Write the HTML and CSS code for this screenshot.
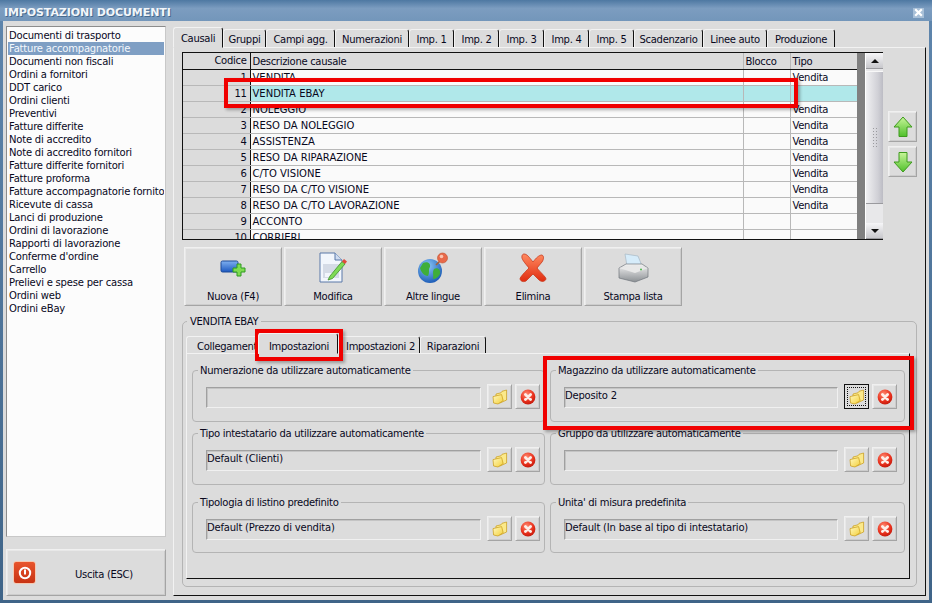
FILE: index.html
```html
<!DOCTYPE html>
<html lang="it">
<head>
<meta charset="utf-8">
<title>Impostazioni documenti</title>
<link rel="stylesheet" href="styles.css">
</head>
<body>
<svg class="defs" width="0" height="0" aria-hidden="true">
  <defs>
    <linearGradient id="gFolder" x1="0" y1="0" x2="1" y2="1"><stop offset="0" stop-color="#fff9c0"/><stop offset="1" stop-color="#f4cf38"/></linearGradient>
    <radialGradient id="gRed" cx=".4" cy=".3" r=".8"><stop offset="0" stop-color="#ff8a70"/><stop offset=".6" stop-color="#e8301c"/><stop offset="1" stop-color="#b81408"/></radialGradient>
    <linearGradient id="gArrow" x1="0" y1="0" x2="0" y2="1"><stop offset="0" stop-color="#c8f59a"/><stop offset="1" stop-color="#4fc02a"/></linearGradient>
    <symbol id="folder" viewBox="0 0 16 16">
      <path d="M4 5 L9 3.8 L10 2.3 L14.6 1 L14.6 11 L8 14 L4 13 Z" fill="#fbe98a" stroke="#c99a14" stroke-width=".7"/>
      <path d="M1 7.6 L9.6 5.6 L11.2 11.6 L6 15 L1.6 14 Z" fill="url(#gFolder)" stroke="#c99a14" stroke-width=".7"/>
    </symbol>
    <symbol id="cancel" viewBox="0 0 16 16">
      <circle cx="8" cy="8" r="7.4" fill="url(#gRed)"/>
      <path d="M5.4 5.4 L10.6 10.6 M10.6 5.4 L5.4 10.6" stroke="#fdeee8" stroke-width="2.8" stroke-linecap="round"/>
    </symbol>
  </defs>
</svg>
<div class="window">
  <header class="titlebar">
    <span class="title">IMPOSTAZIONI DOCUMENTI</span>
    <span class="close">
      <svg width="9" height="9" viewBox="0 0 9 9"><path d="M1.2 1.2 L7.8 7.8 M7.8 1.2 L1.2 7.8" stroke="#fff" stroke-width="2.2"/></svg>
    </span>
  </header>
  <div class="main">
    <aside class="side">
      <ul class="doclist">
        <li>Documenti di trasporto</li>
        <li class="sel">Fatture accompagnatorie</li>
        <li>Documenti non fiscali</li>
        <li>Ordini a fornitori</li>
        <li>DDT carico</li>
        <li>Ordini clienti</li>
        <li>Preventivi</li>
        <li>Fatture differite</li>
        <li>Note di accredito</li>
        <li>Note di accredito fornitori</li>
        <li>Fatture differite fornitori</li>
        <li>Fatture proforma</li>
        <li>Fatture accompagnatorie fornitori</li>
        <li>Ricevute di cassa</li>
        <li>Lanci di produzione</li>
        <li>Ordini di lavorazione</li>
        <li>Rapporti di lavorazione</li>
        <li>Conferme d'ordine</li>
        <li>Carrello</li>
        <li>Prelievi e spese per cassa</li>
        <li>Ordini web</li>
        <li>Ordini eBay</li>
      </ul>
      <button class="exit btn">
        <span class="power">
          <svg width="14" height="14" viewBox="0 0 14 14"><circle cx="7" cy="7" r="5.2" fill="none" stroke="#fff" stroke-width="2"/><rect x="6" y="3.5" width="2" height="5" fill="#fff"/></svg>
        </span>
        <span class="exit-label">Uscita (ESC)</span>
      </button>
    </aside>
    <section class="content">
      <nav class="tabs toptabs">
        <span class="tab on">Causali</span>
        <span class="tab">Gruppi</span>
        <span class="tab">Campi agg.</span>
        <span class="tab">Numerazioni</span>
        <span class="tab">Imp. 1</span>
        <span class="tab">Imp. 2</span>
        <span class="tab">Imp. 3</span>
        <span class="tab">Imp. 4</span>
        <span class="tab">Imp. 5</span>
        <span class="tab">Scadenzario</span>
        <span class="tab">Linee auto</span>
        <span class="tab">Produzione</span>
      </nav>
      <div class="panel">
        <div class="gridrow">
          <div class="grid">
            <div class="tablewrap">
              <table>
                <colgroup><col class="c1"><col class="c2"><col class="c3"><col class="c4"></colgroup>
                <thead><tr><th class="num">Codice</th><th>Descrizione causale</th><th>Blocco</th><th>Tipo</th></tr></thead>
                <tbody>
                  <tr><td class="num">1</td><td>VENDITA</td><td></td><td>Vendita</td></tr>
                  <tr class="hl"><td class="num">11</td><td>VENDITA EBAY</td><td></td><td></td></tr>
                  <tr><td class="num">2</td><td>NOLEGGIO</td><td></td><td>Vendita</td></tr>
                  <tr><td class="num">3</td><td>RESO DA NOLEGGIO</td><td></td><td>Vendita</td></tr>
                  <tr><td class="num">4</td><td>ASSISTENZA</td><td></td><td>Vendita</td></tr>
                  <tr><td class="num">5</td><td>RESO DA RIPARAZIONE</td><td></td><td>Vendita</td></tr>
                  <tr><td class="num">6</td><td>C/TO VISIONE</td><td></td><td>Vendita</td></tr>
                  <tr><td class="num">7</td><td>RESO DA C/TO VISIONE</td><td></td><td>Vendita</td></tr>
                  <tr><td class="num">8</td><td>RESO DA C/TO LAVORAZIONE</td><td></td><td>Vendita</td></tr>
                  <tr><td class="num">9</td><td>ACCONTO</td><td></td><td></td></tr>
                  <tr><td class="num">10</td><td>CORRIERI</td><td></td><td></td></tr>
                </tbody>
              </table>
            </div>
            <div class="gutter"></div>
            <div class="scrollbar">
              <span class="sb-btn"><i class="tri up"></i></span>
              <span class="sb-thumb"><i class="grip"></i></span>
              <span class="sb-track"></span>
              <span class="sb-btn"><i class="tri down"></i></span>
            </div>
          </div>
          <div class="arrows">
            <button class="btn arrow">
              <svg width="20" height="22" viewBox="0 0 20 22"><path d="M10 1 L19 11 L14 11 L14 20.5 L6 20.5 L6 11 L1 11 Z" fill="url(#gArrow)" stroke="#3e9a1e"/></svg>
            </button>
            <button class="btn arrow">
              <svg width="20" height="22" viewBox="0 0 20 22"><path d="M6 1.5 L14 1.5 L14 11 L19 11 L10 21 L1 11 L6 11 Z" fill="url(#gArrow)" stroke="#3e9a1e"/></svg>
            </button>
          </div>
        </div>
        <div class="actions">
          <button class="btn action">
            <svg width="28" height="28" viewBox="0 0 28 28">
              <defs><linearGradient id="gBlue" x1="0" y1="0" x2="0" y2="1"><stop offset="0" stop-color="#7fb0f0"/><stop offset="1" stop-color="#1c58c0"/></linearGradient></defs>
              <rect x="2" y="7" width="17" height="11" rx="1.5" fill="url(#gBlue)" stroke="#1d4a98"/>
              <path d="M15 12 h4 v-4 h4 v4 h4 v4 h-4 v4 h-4 v-4 h-4 Z" transform="translate(-1 2)" fill="#7fdc50" stroke="#2f9a20"/>
            </svg>
            <span>Nuova (F4)</span>
          </button>
          <button class="btn action">
            <svg width="30" height="32" viewBox="0 0 30 32">
              <path d="M2 1 H17 L24 8 V30 H2 Z" fill="#f2f6fc" stroke="#5a78a8"/>
              <path d="M17 1 V8 H24" fill="#cfdcf0" stroke="#5a78a8"/>
              <rect x="5" y="12" width="16" height="14" fill="#d5dbe6"/>
              <rect x="7" y="21" width="9" height="4" fill="#f2f6fc"/>
              <path d="M12 24 L10 28 L14.5 26.5 L27 12 L24 9.5 Z" fill="#7edb55" stroke="#3f8f28" stroke-width=".8"/>
              <path d="M24 9.5 L26 7 L29 9.5 L27 12 Z" fill="#e0493a"/>
            </svg>
            <span>Modifica</span>
          </button>
          <button class="btn action">
            <svg width="32" height="32" viewBox="0 0 32 32">
              <defs><radialGradient id="gGlobe" cx=".4" cy=".3" r=".8"><stop offset="0" stop-color="#8cc8f8"/><stop offset="1" stop-color="#1050b0"/></radialGradient></defs>
              <circle cx="13" cy="19" r="12" fill="url(#gGlobe)"/>
              <path d="M6 11 C10 9 14 11 13 15 C11 18 13 20 11 24 C7 24 4 20 3 16 Z M17 17 C21 15 24 18 23 22 C21 26 18 27 16 27 C17 23 15 20 17 17 Z" fill="#3fae3a"/>
              <path d="M19 13 L25 7" stroke="#a86038" stroke-width="1.6"/>
              <circle cx="25.5" cy="6" r="5" fill="#e8694a" stroke="#c0502c" stroke-width=".6"/>
              <circle cx="24.5" cy="4.5" r="1.8" fill="#fbc4b0"/>
            </svg>
            <span>Altre lingue</span>
          </button>
          <button class="btn action">
            <svg width="30" height="30" viewBox="0 0 30 30">
              <defs><linearGradient id="gX" x1="0" y1="0" x2="0" y2="1"><stop offset="0" stop-color="#ff8a60"/><stop offset="1" stop-color="#e02c10"/></linearGradient></defs>
              <path d="M6 1 C9 1 11 4 15 9 C18 5 21 2 24 2 C26 3 26 6 24 9 L19 15 C22 19 28 24 28 26 C27 29 23 29 21 27 L15 21 L8 28 C6 29 3 29 2 26 C2 24 7 19 11 15 C7 10 3 6 4 3 C4 2 5 1 6 1 Z" fill="url(#gX)" stroke="#c83a1c" stroke-width=".8"/>
            </svg>
            <span>Elimina</span>
          </button>
          <button class="btn action">
            <svg width="32" height="30" viewBox="0 0 32 30">
              <defs><linearGradient id="gPr" x1="0" y1="0" x2="0" y2="1"><stop offset="0" stop-color="#f4f4f4"/><stop offset="1" stop-color="#8c9094"/></linearGradient></defs>
              <path d="M8 1 L21 3 L25 13 L10 13 Z" fill="#d6ecfa" stroke="#a8b8c4" stroke-width=".7"/>
              <path d="M2 15 L9 11 H25 L31 15 V24 L18 29 L2 25 Z" fill="url(#gPr)" stroke="#70767c" stroke-width=".7"/>
              <path d="M2 15 L18 20 L31 15 L18 12 Z" fill="#e8e8e8"/>
              <circle cx="24" cy="16.5" r="1" fill="#4cb84c"/>
            </svg>
            <span>Stampa lista</span>
          </button>
        </div>
        <fieldset class="detail">
          <legend>VENDITA EBAY</legend>
          <nav class="tabs subtabs">
            <span class="tab">Collegamenti</span>
            <span class="tab on">Impostazioni</span>
            <span class="tab">Impostazioni 2</span>
            <span class="tab">Riparazioni</span>
          </nav>
          <div class="subpanel">
            <fieldset class="opt">
              <legend>Numerazione da utilizzare automaticamente</legend>
              <div class="optrow"><span class="field"></span>
                <button class="btn sq"><svg width="16" height="16"><use href="#folder"/></svg></button>
                <button class="btn sq"><svg width="16" height="16"><use href="#cancel"/></svg></button></div>
            </fieldset>
            <fieldset class="opt">
              <legend>Magazzino da utilizzare automaticamente</legend>
              <div class="optrow"><span class="field">Deposito 2</span>
                <button class="btn sq focus"><svg width="16" height="16"><use href="#folder"/></svg></button>
                <button class="btn sq"><svg width="16" height="16"><use href="#cancel"/></svg></button></div>
            </fieldset>
            <fieldset class="opt">
              <legend>Tipo intestatario da utilizzare automaticamente</legend>
              <div class="optrow"><span class="field">Default (Clienti)</span>
                <button class="btn sq"><svg width="16" height="16"><use href="#folder"/></svg></button>
                <button class="btn sq"><svg width="16" height="16"><use href="#cancel"/></svg></button></div>
            </fieldset>
            <fieldset class="opt">
              <legend>Gruppo da utilizzare automaticamente</legend>
              <div class="optrow"><span class="field"></span>
                <button class="btn sq"><svg width="16" height="16"><use href="#folder"/></svg></button>
                <button class="btn sq"><svg width="16" height="16"><use href="#cancel"/></svg></button></div>
            </fieldset>
            <fieldset class="opt last">
              <legend>Tipologia di listino predefinito</legend>
              <div class="optrow"><span class="field">Default (Prezzo di vendita)</span>
                <button class="btn sq"><svg width="16" height="16"><use href="#folder"/></svg></button>
                <button class="btn sq"><svg width="16" height="16"><use href="#cancel"/></svg></button></div>
            </fieldset>
            <fieldset class="opt last">
              <legend>Unita' di misura predefinita</legend>
              <div class="optrow"><span class="field">Default (In base al tipo di intestatario)</span>
                <button class="btn sq"><svg width="16" height="16"><use href="#folder"/></svg></button>
                <button class="btn sq"><svg width="16" height="16"><use href="#cancel"/></svg></button></div>
            </fieldset>
          </div>
        </fieldset>
      </div>
    </section>
  </div>
  <div class="mark mark-row"></div>
  <div class="mark mark-tab"></div>
  <div class="mark mark-group"></div>
</div>
</body>
</html>
```
FILE: styles.css
```css
* { box-sizing: border-box; }
html, body { margin: 0; padding: 0; }
body { width: 932px; height: 603px; overflow: hidden; font: 10px/13px "DejaVu Sans", sans-serif; letter-spacing: -0.3px; color: #08081c; background: #35506e; }
.defs { position: absolute; }
.window { position: relative; width: 932px; height: 603px; display: flex; flex-direction: column; background: linear-gradient(#5f86ad, #3f6488); }
.titlebar { height: 21px; flex: none; display: flex; align-items: center; justify-content: space-between; padding: 4px 8px 0 4px; background: linear-gradient(#4e78a2, #7c9dc0 40%, #7396ba); }
.title { font-weight: bold; font-size: 11px; letter-spacing: -0.1px; color: #f2f6fa; text-shadow: 1px 1px 0 #466a8e; }
.close { width: 11px; height: 10px; display: flex; align-items: center; justify-content: center; background: #a8c0d8; }
.main { flex: 1; min-height: 0; display: flex; gap: 7px; margin: 0 3px 3px; padding: 5px 3px 4px; background: #dcdcdc; border-top: 1px solid #dcdcdc; }
.side { width: 160px; flex: none; display: flex; flex-direction: column; margin-top: -1px; }
.doclist { flex: 1; margin: 0; padding: 2px 1px 0 1px; list-style: none; letter-spacing: -0.2px; background: #fcfcfc; border: 1px solid #8c8c8c; border-right-color: #c8c8c8; border-bottom-color: #c8c8c8; overflow: hidden; }
.doclist li { height: 13px; padding-left: 1px; white-space: nowrap; overflow: hidden; }
.doclist .sel { background: #7f9fc4; color: #f4f8fc; }
.btn { display: flex; align-items: center; justify-content: center; padding: 0; margin: 0; font: inherit; letter-spacing: inherit; color: inherit; background: #dcdcdc; border: 1px solid; border-color: #f0f0f0 #a4a4a4 #a4a4a4 #f0f0f0; box-shadow: inset 1px 1px 0 #e8e8e8, inset -1px -1px 0 #cccccc; }
.exit { height: 47px; flex: none; margin-top: 12px; justify-content: flex-start; padding-left: 6px; }
.power { width: 23px; height: 23px; display: flex; align-items: center; justify-content: center; background: linear-gradient(#e8542c, #c83414); border: 1px solid #f6c8b0; border-radius: 3px; }
.exit-label { margin-left: 39px; padding-top: 4px; }
.content { flex: 1; min-width: 0; display: flex; flex-direction: column; }
.tabs { display: grid; flex: none; }
.tab { display: flex; align-items: center; justify-content: center; white-space: nowrap; overflow: hidden; background: #dcdcdc; border-top: 1px solid #f2f2f2; border-left: 1px solid #f2f2f2; border-right: 1px solid #111; border-radius: 3px 3px 0 0; }
.toptabs { height: 20px; grid-template-columns: 50px 43px 69px 74px 45px 45px 45px 45px 45px 69px 64px 68px; align-items: end; }
.toptabs .tab { height: 18px; padding-top: 2px; }
.toptabs .tab.on { padding-top: 1px; z-index: 1; margin-bottom: -1px; height: 21px; border-bottom: 1px solid #dcdcdc; }
.panel { flex: 1; min-height: 0; padding: 4px 8px 0 8px; background: #dcdcdc; border-top: 1px solid #f2f2f2; border-left: 1px solid #f2f2f2; border-right: 1px solid #111; border-bottom: 1px solid #111; }
.gridrow { display: flex; gap: 5px; height: 188px; }
.grid { width: 701px; height: 188px; flex: none; display: flex; border: 1px solid #111; background: #fafafa; }
.tablewrap { width: 674px; flex: none; overflow: hidden; }
table { width: 674px; table-layout: fixed; border-collapse: collapse; }
.c1 { width: 67px; } .c2 { width: 493px; } .c3 { width: 47px; } .c4 { width: 67px; }
th, td { height: 16px; padding: 0 0 0 2px; font-weight: normal; text-align: left; white-space: nowrap; overflow: hidden; border-right: 1px solid #b8b8b8; border-bottom: 1px solid #b8b8b8; }
td:nth-child(2) { letter-spacing: 0; }
th { padding-top: 1px; background: #dcdcdc; border-bottom: 1px solid #111; border-right-color: #b8b8b8; }
th:first-child { border-right-color: #111; }
td:first-child { background: #dcdcdc; border-right: 1px solid #111; }
.num { text-align: right; padding: 0 3px 0 0; }
.hl td:not(:first-child) { background: #b0e8ea; }
.gutter { width: 8px; flex: none; background: #808080; }
.scrollbar { width: 18px; flex: none; display: flex; flex-direction: column; background: #e8e8ea; border-left: 1px solid #fff; }
.sb-btn { height: 16px; flex: none; display: flex; align-items: center; justify-content: center; background: linear-gradient(#f6f6f8, #c8c8cc); border-bottom: 1px solid #9a9a9e; }
.tri { width: 0; height: 0; border-left: 4px solid transparent; border-right: 4px solid transparent; }
.tri.up { border-bottom: 4px solid #111; }
.tri.down { border-top: 4px solid #111; }
.sb-thumb { height: 133px; flex: none; margin-top: 2px; display: flex; align-items: center; justify-content: center; background: linear-gradient(90deg, #f0f0f2, #d0d0d6 70%, #bcbcc4); border-top: 1px solid #f8f8f8; border-bottom: 1px solid #9a9a9e; }
.grip { width: 6px; height: 22px; background-image: radial-gradient(#9a9a9e 0.8px, transparent 1px); background-size: 3px 3px; }
.sb-track { flex: 1; }
.arrows { display: flex; flex-direction: column; gap: 4px; padding-top: 59px; }
.arrow { width: 29px; height: 31px; }
.actions { display: flex; gap: 2px; height: 59px; margin: 7px 0 0 2px; }
.action { width: 98px; height: 59px; display: grid; grid-template-rows: 38px 18px; justify-items: center; align-items: center; padding-top: 1px; }
.detail { margin: 9px 0 0; padding: 7px 6px 6px 3px; height: 272px; border: 1px solid #b4b4b4; border-radius: 5px; min-width: 0; }
.detail > legend { padding: 0 3px; margin-left: 1px; }
.subtabs { height: 18px; grid-template-columns: 72px 80px 82px 66px; align-items: end; }
.subtabs .tab { height: 17px; padding-top: 2px; }
.subtabs .tab:first-child { border-right: none; justify-content: flex-start; padding-left: 10px; }
.subtabs .tab:nth-child(3) { padding-left: 3px; }
.subtabs .tab.on { height: 21px; margin-top: -3px; z-index: 1; margin-bottom: -1px; padding: 6px 0 0 2px; border-bottom: 1px solid #dcdcdc; }
.subpanel { height: 226px; display: grid; grid-template-columns: 353px 355px; grid-template-rows: 58px 58px 63px; column-gap: 5px; row-gap: 5px; align-content: start; padding: 10px 0 0 5px; border-top: 1px solid #f2f2f2; border-left: 1px solid #f2f2f2; border-right: 1px solid #111; border-bottom: 1px solid #111; }
.opt { margin: 0; padding: 0 7px 0 13px; min-width: 0; border: 1px solid #b4b4b4; border-radius: 4px; }
.opt:nth-child(odd) { padding-right: 4px; }
.opt > legend { padding: 0 2px; margin-left: -8px; white-space: nowrap; }
.opt.last { margin-top: 6px; }
.optrow { display: flex; align-items: flex-start; gap: 3px; margin-top: 7px; }
.field { flex: 1; height: 21px; margin: 3px 3px 0 0; padding: 1px 0 0; letter-spacing: -0.2px; border: 1px solid; border-color: #a0a0a0 #f0f0f0 #f0f0f0 #a0a0a0; box-shadow: inset 1px 1px 0 #c4c4c4; background: #dcdcdc; }
.sq { width: 25px; height: 25px; flex: none; }
.focus { position: relative; border-color: #111; box-shadow: none; }
.focus::after { content: ""; position: absolute; inset: 2px; border: 1px dotted #111; }
.mark { position: absolute; border: 4px solid #f00000; box-shadow: 2px 2px 3px rgba(0, 0, 0, .3); pointer-events: none; }
.mark-row { left: 224px; top: 78px; width: 574px; height: 30px; }
.mark-tab { left: 255px; top: 329px; width: 88px; height: 32px; }
.mark-group { left: 543px; top: 356px; width: 371px; height: 74px; }
```
